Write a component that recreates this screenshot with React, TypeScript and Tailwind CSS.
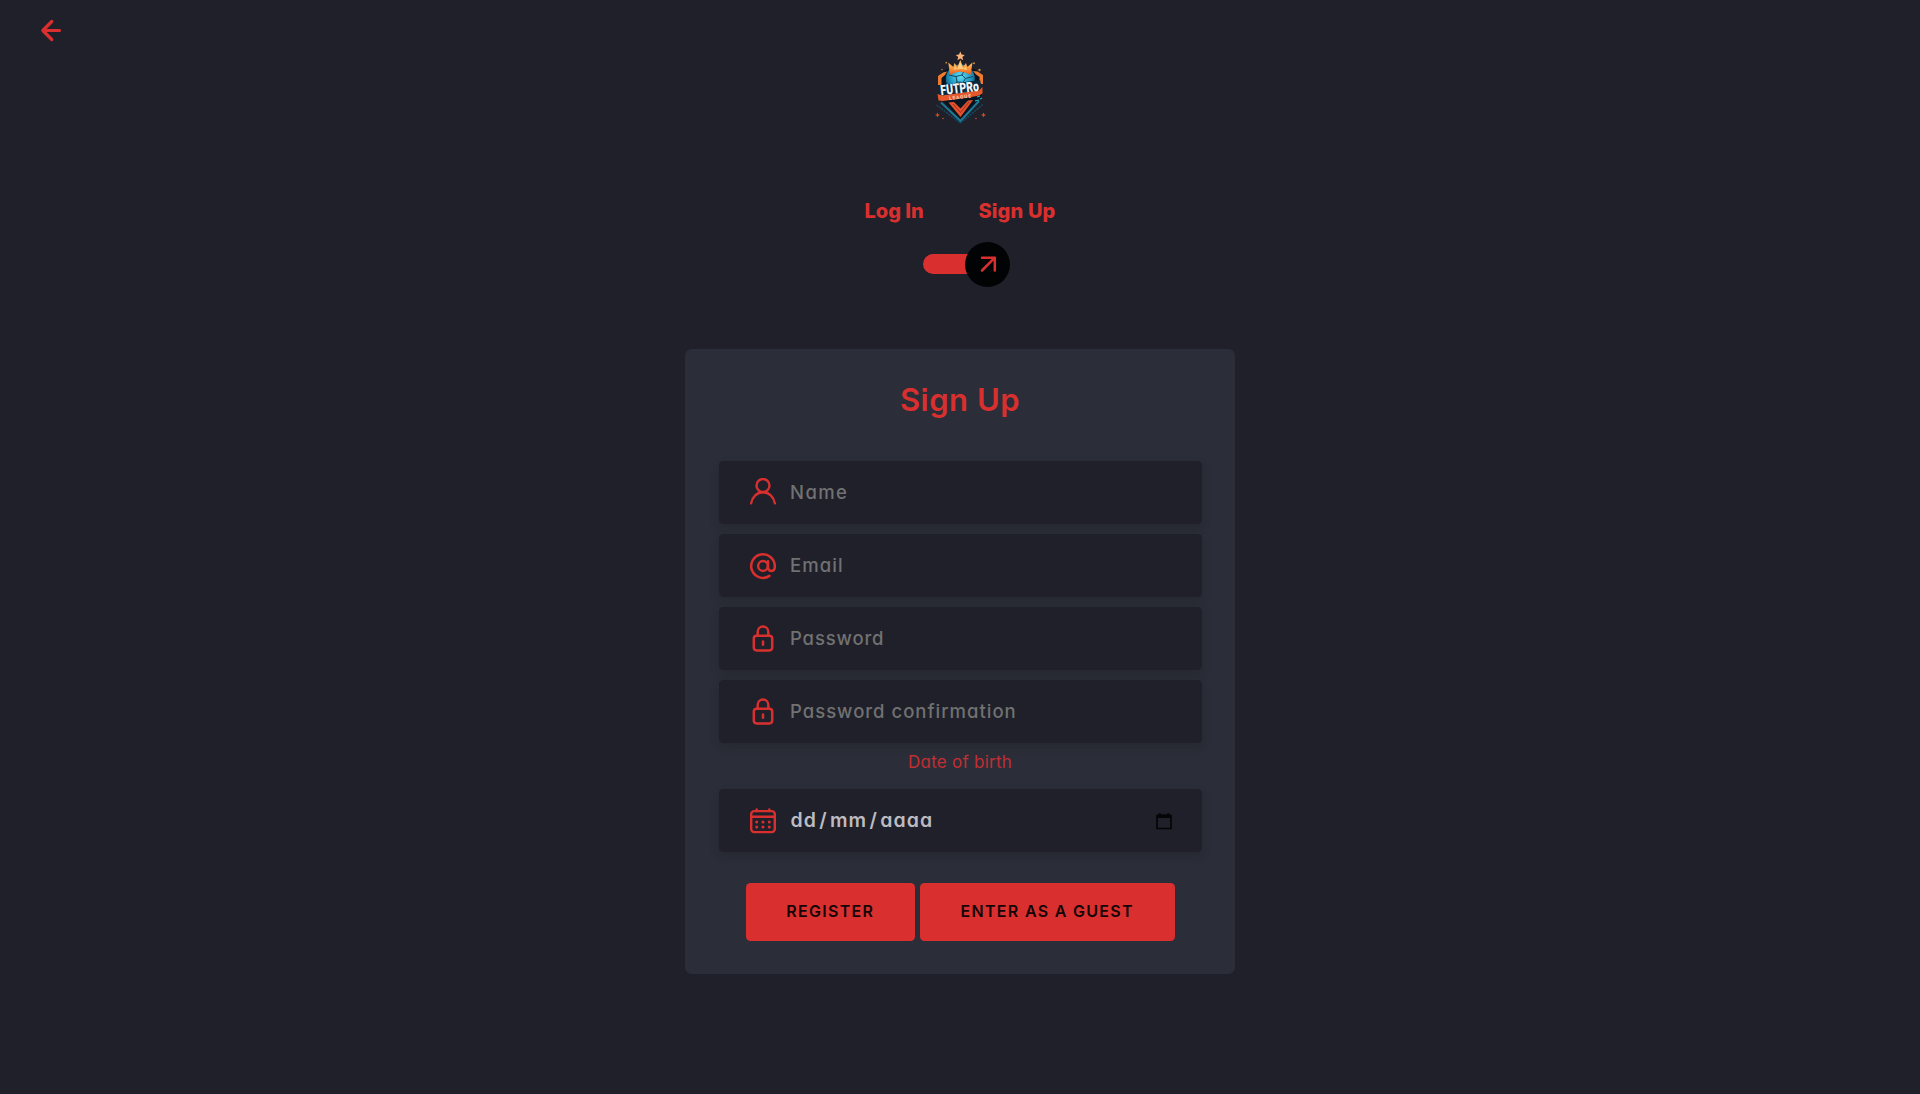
import React from "react";

type FieldProps = { icon: React.ReactNode; children: React.ReactNode; trailing?: React.ReactNode };

const RED = "#d9302f";

function Logo() {
  return (
    <svg className="overflow-visible" width="54" height="72" viewBox="0 0 54 72" fill="none">
      <defs>
        <linearGradient id="gold" x1="0" y1="0" x2="0" y2="1">
          <stop offset="0" stopColor="#ffcb78" />
          <stop offset="0.55" stopColor="#fb9a3c" />
          <stop offset="1" stopColor="#e8561d" />
        </linearGradient>
        <radialGradient id="ball" cx="0.5" cy="0.4" r="0.65">
          <stop offset="0" stopColor="#62dcf5" />
          <stop offset="0.6" stopColor="#1c93bd" />
          <stop offset="1" stopColor="#0b3850" />
        </radialGradient>
      </defs>
      <path d="M27.300 0.500L28.600 3.600L31.800 3.900L29.400 6L30.200 9.200L27.300 7.500L24.400 9.200L25.200 6L22.800 3.900L26 3.600Z" fill="#fbb27c" />
      <g fill="#c98a3c">
        <circle cx="13.300" cy="11.700" r="0.900" />
        <circle cx="41" cy="12.300" r="1" />
        <circle cx="46.500" cy="19" r="1.200" />
        <circle cx="9" cy="18.500" r="0.700" />
      </g>
      <g fill="#c8502a">
        <path d="M4.500 61.500l.8 1.700 1.700.8-1.700.8-.8 1.700-.8-1.700L2 64l1.700-.8z" />
        <path d="M50.500 61.500l.8 1.700 1.700.8-1.700.8-.8 1.700-.8-1.700L48 64l1.700-.8z" />
        <circle cx="10" cy="67.500" r="0.800" />
        <circle cx="43" cy="67.500" r="0.800" />
      </g>
      <path d="M8 22L14 18H41L47 22L49 46L27.500 68L6 46Z" fill="#0a1420" />
      <path d="M5 34V25L10 21.500L14 20.500L12 24L8.500 27V34Z" fill="#ee7a30" />
      <path d="M50 33V24L44.500 20.500L40 20L43 23.500L46.500 26V33Z" fill="#ee7a30" />
      <circle cx="27.300" cy="28" r="14.500" fill="url(#ball)" />
      <path d="M23 25.500L29 24L32.500 27.500L30 31.500L24 31ZM23 25.500L16 24M32.500 27.500L40 25.500M24 31L19 35M30 31.500L33 35M29 24L31 20" stroke="#0c4964" strokeWidth="1" />
      <path d="M17 24L15.300 11.500L20.300 16L21.500 12L24.500 16L27.300 9L30 16L33 12L34.300 16L39.500 11.500L37.500 24Q27 17.500 17 24Z" fill="url(#gold)" />
      <path d="M20.500 19L22 15.500L24 18L27.300 11.500L30.500 18L32.500 15.500L34 19Q27 17 20.500 19Z" fill="#ffe09a" opacity="0.7" />
      <path d="M6.500 34.500L47 29L49 38L6 45Z" fill="#0a2840" />
      <path d="M4.500 43L9 44.500L46 39.500L49.500 36V42.500L46 44.500L36 46.500L10 50L5.500 49.500Z" fill="#e4582b" />
      <path d="M8 51.500L27.500 70L46 50" stroke="#1b7896" strokeWidth="2" />
      <path d="M3.500 54L27.500 72L50.500 53" stroke="#144f69" strokeWidth="1.300" strokeDasharray="2 1" />
      <path d="M15.500 51.500L27.500 66L40 49L35 49.500L27.500 57.500L21 51Z" fill="#e4512b" />
      <path d="M20 53L27.500 61.500L36 51" stroke="#8f2a24" strokeWidth="0.900" />
      <path d="M44 46l3-1M42 50l4-1M47 48l2-1" stroke="#2ab3cf" strokeWidth="1.200" />
      <g transform="rotate(-6.500 27 42)" textAnchor="middle" fontFamily="Roboto, sans-serif">
        <text x="27.200" y="42" fontSize="14" fontWeight="900" fill="#f4f8fb" textLength="38.500" lengthAdjust="spacingAndGlyphs">FUTPRo</text>
        <text x="26.500" y="47.700" fontSize="4.800" fontWeight="900" fill="#fbc3a0" textLength="22">LEAGUE</text>
      </g>
    </svg>
  );
}

function UserIcon() {
  return (
    <svg width="28" height="28" viewBox="0 0 28 28" fill="none" stroke={RED} strokeWidth="2.400" strokeLinecap="round">
      <circle cx="14" cy="7.500" r="6.500" />
      <path d="M2.100 25.400C3.200 18.800 8 14.200 14 14.200S24.800 18.800 25.900 25.400" />
    </svg>
  );
}

function AtIcon() {
  return (
    <svg width="28" height="28" viewBox="0 0 28 28" fill="none" stroke={RED} strokeWidth="2.500" strokeLinecap="round">
      <circle cx="14" cy="14" r="4.900" />
      <path d="M19 9.300V15.600A3.400 3.400 0 0 0 25.800 15.600V14A11.800 11.800 0 1 0 20.500 23.900" />
    </svg>
  );
}

function LockIcon() {
  return (
    <svg width="28" height="28" viewBox="0 0 28 28" fill="none" stroke={RED} strokeWidth="2.500" strokeLinecap="round">
      <rect x="4.800" y="10.800" width="18.400" height="14.600" rx="2.800" />
      <path d="M8.700 10.800V6.900a5.300 5.300 0 0 1 10.600 0V10.800M14 16.500v3.300" />
    </svg>
  );
}

function CalendarIcon() {
  return (
    <svg width="28" height="28" viewBox="0 0 28 28" fill="none" stroke={RED} strokeWidth="2.400" strokeLinecap="round">
      <rect x="2.200" y="4.100" width="23.600" height="21" rx="3" />
      <path d="M2.500 9.800h23M7.700 2.500V4M20.300 2.500V4" />
      <path d="M7.700 15.100h.01M14 15.100h.01M20.300 15.100h.01M7.700 20.100h.01M14 20.100h.01M20.300 20.100h.01" strokeWidth="3" />
    </svg>
  );
}

function Field({ icon, children, trailing }: FieldProps) {
  return (
    <div className="flex h-[62.5px] w-full items-center rounded-[4.5px] bg-[#1f2029] pr-[29.5px] pl-[30.5px] shadow-[0_4px_10px_rgba(21,21,21,0.2)]">
      {icon}
      <div className="ml-[13px] flex-1 text-[18.5px] leading-none font-medium whitespace-nowrap">{children}</div>
      {trailing}
    </div>
  );
}

export default function App() {
  return (
    <div className="relative flex h-[1094px] w-full flex-col items-center overflow-hidden bg-[#1f2029] font-['Inter',sans-serif] text-[#d9302f] [font-feature-settings:'cv11'_1,'ss07'_1]">
      <button className="absolute top-[18px] left-[38.5px]" aria-label="Back">
        <svg width="24" height="24" viewBox="0 0 24 24" fill="none" stroke={RED} strokeWidth="3.200" strokeLinecap="round" strokeLinejoin="round">
          <path d="M20.500 12.500H3.800M12.800 3.500L3.800 12.500L12.800 21.500" />
        </svg>
      </button>
      <div className="mt-[51px] h-[72px]">
        <Logo />
      </div>

      <div className="mt-[76px] flex h-[24px] w-[191px] items-center justify-between text-[20px] leading-none font-extrabold whitespace-nowrap">
        <span>Log In</span>
        <span className="tracking-[0.15px]">Sign Up</span>
      </div>

      <div className="mt-[18.5px] ml-[13px] flex h-[45px] w-[87px] items-center">
        <div className="h-[20px] w-[60px] shrink-0 rounded-full bg-[#d9302f]" />
        <div className="-ml-[18px] flex size-[45px] shrink-0 items-center justify-center rounded-full bg-[#020305]">
          <svg width="20" height="20" viewBox="0 0 20 20" fill="none" stroke={RED} strokeWidth="2.500" strokeLinecap="round" strokeLinejoin="round">
            <path d="M4 16.500L16.800 3.700M4 3.700H16.800V16.500" />
          </svg>
        </div>
      </div>

      <main className="mt-[62px] flex h-[625px] w-[550px] flex-col items-center rounded-[6.5px] bg-[#2b2e38] px-[33.5px]">
        <h1 className="mt-[33px] h-[36px] text-[31px] leading-[36px] font-semibold tracking-[0.5px] whitespace-nowrap">Sign Up</h1>
        <div className="mt-[43.7px] flex w-full flex-col gap-[10.6px] text-[#717172]">
          <Field icon={<UserIcon />}><span className="tracking-[1.4px]">Name</span></Field>
          <Field icon={<AtIcon />}><span className="tracking-[1.1px]">Email</span></Field>
          <Field icon={<LockIcon />}><span className="tracking-[0.85px]">Password</span></Field>
          <Field icon={<LockIcon />}><span className="tracking-[1px]">Password confirmation</span></Field>
        </div>
        <p className="mt-[7.3px] h-[24px] text-[17px] leading-[24px] tracking-[0.25px] whitespace-nowrap text-[#c12f33]">Date of birth</p>
        <div className="mt-[15px] w-full text-[#bcbbc2]">
          <Field
            icon={<CalendarIcon />}
            trailing={
              <svg width="16" height="18" viewBox="0 0 16 18" fill="none">
                <path d="M1 3.500h14v13H1z" stroke="#050507" strokeWidth="1.700" strokeLinejoin="round" />
                <path d="M1 2.500h14v3.500H1zM3 1h1.600v2H3zM11.400 1H13v2h-1.600z" fill="#050507" />
              </svg>
            }
          >
            <span className="ml-[0.5px] text-[19.5px] font-semibold tracking-[1.1px]">
              dd<span className="mx-[2.2px]">/</span>mm<span className="mx-[2.2px]">/</span>aaaa
            </span>
          </Field>
        </div>
        <div className="mt-[31.5px] flex gap-[5px] text-[16px] leading-none font-semibold whitespace-nowrap text-[#150406]">
          <button className="h-[58px] w-[169.5px] rounded-[4.5px] bg-[#d9302f] pb-[2px]"><span className="tracking-[1.3px]">REGISTER</span></button>
          <button className="h-[58px] w-[254.5px] rounded-[4.5px] bg-[#d9302f] pb-[2px]"><span className="tracking-[1.3px]">ENTER AS A GUEST</span></button>
        </div>
      </main>
    </div>
  );
}
